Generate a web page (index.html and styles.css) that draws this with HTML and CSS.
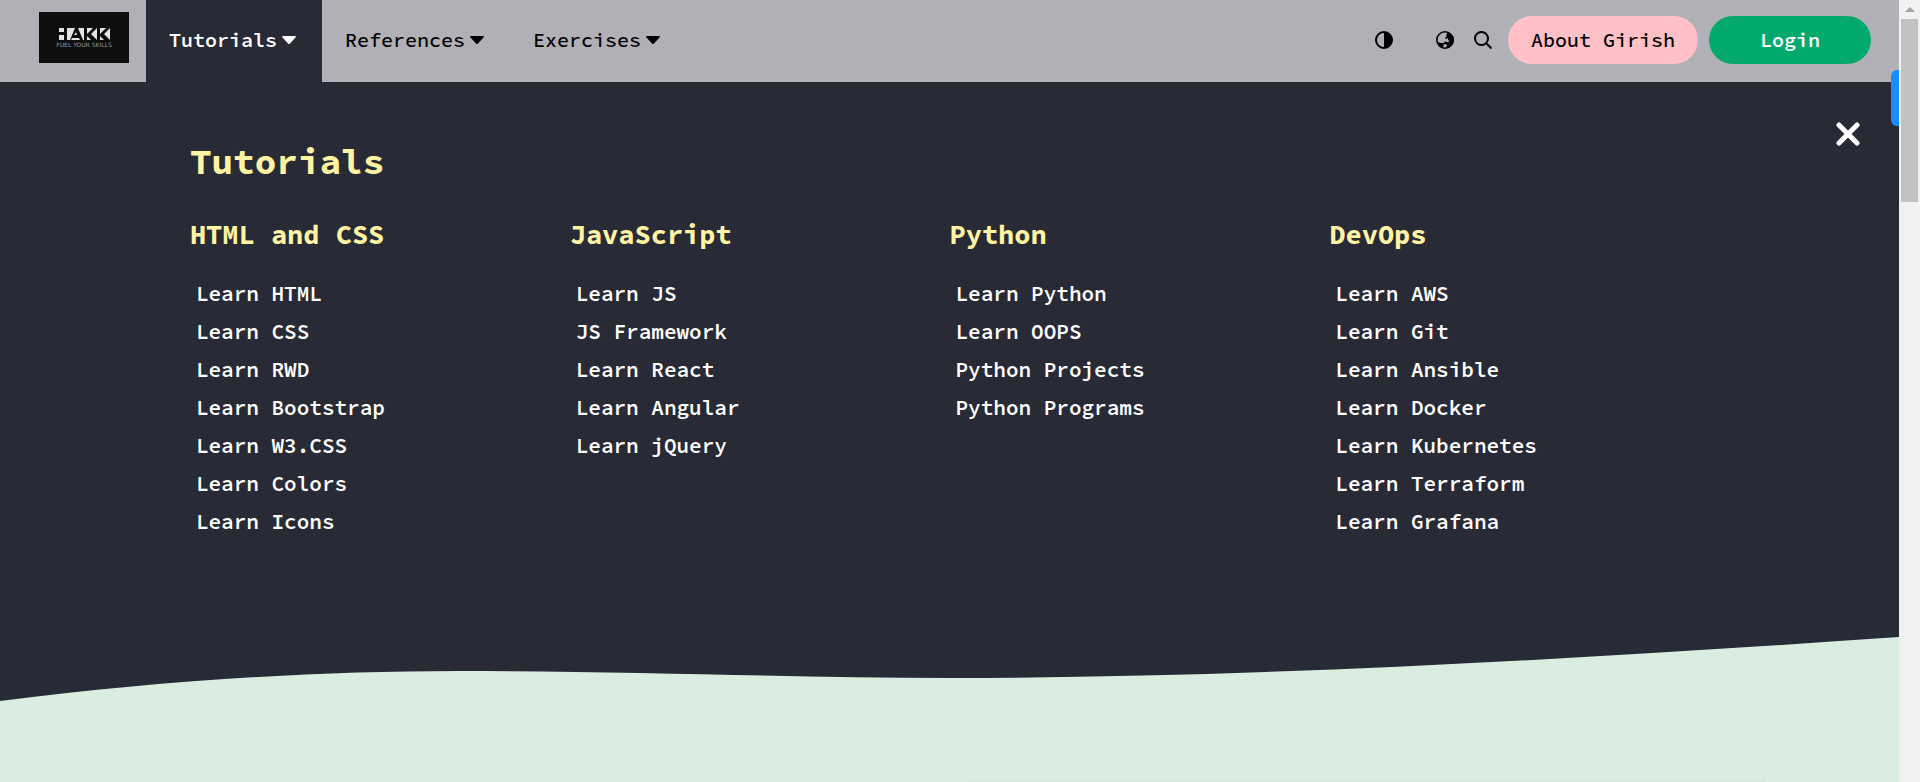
FILE: index.html
```html
<!DOCTYPE html>
<html lang="en">
<head>
<meta charset="utf-8">
<title>HAKK - Tutorials</title>
<link rel="stylesheet" href="styles.css">
</head>
<body>
<div class="page">
  <header class="topbar">
    <a class="logo" href="#" aria-label="HAKK home">
      <svg class="logo-mark" viewBox="0 0 54 14" aria-hidden="true">
        <path fill="#e4e4e4" d="M2 1h5v4H2zM2 8h5v5H2zM10 1h8l-5 12h-3zM19 5l1 3h-3zM15 11h7l1 2h-9zM21 1h6v12h-1zM30 1h6l-6 6zM30 9l4 4h-4zM40 1v12l-6-6zM43 1h6l-6 6zM43 9l4 4h-4zM53 1v12l-6-6z"/>
      </svg>
      <span class="logo-tag">FUEL YOUR SKILLS</span>
    </a>
    <nav class="menu">
      <button class="menu-item active" type="button">Tutorials<svg class="caret" viewBox="0 0 14 8"><path d="M1 0h12q1.500 0 .5 1.500L8 7.500q-1 1-2 0L.5 1.500Q-.5 0 1 0z"/></svg></button>
      <button class="menu-item" type="button">References<svg class="caret" viewBox="0 0 14 8"><path d="M1 0h12q1.500 0 .5 1.500L8 7.500q-1 1-2 0L.5 1.500Q-.5 0 1 0z"/></svg></button>
      <button class="menu-item" type="button">Exercises<svg class="caret" viewBox="0 0 14 8"><path d="M1 0h12q1.500 0 .5 1.500L8 7.500q-1 1-2 0L.5 1.500Q-.5 0 1 0z"/></svg></button>
    </nav>
    <div class="tools">
      <button class="icon contrast" type="button" aria-label="Toggle dark mode"><svg viewBox="0 0 18 18"><circle cx="9" cy="9" r="8" fill="none" stroke="#000" stroke-width="2"/><path d="M9 1a8 8 0 0 1 0 16z"/></svg></button>
      <button class="icon" type="button" aria-label="Translate"><svg viewBox="0 0 18 18"><circle cx="9" cy="9" r="8.200" fill="none" stroke="#000" stroke-width="1.600"/><path d="M12 1l-2 3 1 1-2 2 1 1 2-1 0 2 2 1-2 1h-2l-1-1-1 2-3 0-3-1 1 4 3 2 2-2-1-1 2-1 2 1-1 3 3 0 4-4 1-4-1-4-3-3z"/></svg></button>
      <button class="icon" type="button" aria-label="Search"><svg viewBox="0 0 18 18" fill="none" stroke="#000" stroke-width="2"><circle cx="7.500" cy="7.500" r="6.500"/><path d="M12 12l5.500 5.500"/></svg></button>
    </div>
    <a class="pill about" href="#">About Girish</a>
    <a class="pill login" href="#">Login</a>
  </header>
  <main class="panel">
    <button class="close" type="button" aria-label="Close menu"><svg viewBox="0 0 24 24"><path d="M3 3l18 18M21 3L3 21" stroke="#fff" stroke-width="5" stroke-linecap="round"/></svg></button>
    <h1>Tutorials</h1>
    <div class="columns">
      <section><h2>HTML and CSS</h2>
        <a href="#">Learn HTML</a><a href="#">Learn CSS</a><a href="#">Learn RWD</a><a href="#">Learn Bootstrap</a><a href="#">Learn W3.CSS</a><a href="#">Learn Colors</a><a href="#">Learn Icons</a>
      </section>
      <section><h2>JavaScript</h2>
        <a href="#">Learn JS</a><a href="#">JS Framework</a><a href="#">Learn React</a><a href="#">Learn Angular</a><a href="#">Learn jQuery</a>
      </section>
      <section><h2>Python</h2>
        <a href="#">Learn Python</a><a href="#">Learn OOPS</a><a href="#">Python Projects</a><a href="#">Python Programs</a>
      </section>
      <section><h2>DevOps</h2>
        <a href="#">Learn AWS</a><a href="#">Learn Git</a><a href="#">Learn Ansible</a><a href="#">Learn Docker</a><a href="#">Learn Kubernetes</a><a href="#">Learn Terraform</a><a href="#">Learn Grafana</a>
      </section>
    </div>
  </main>
  <svg class="wave" viewBox="0 0 1899 68" preserveAspectRatio="none" aria-hidden="true"><path d="M0 64C158 44 310 34 459 34C640 34 790 41 950 41C1250 41 1580 22 1899 0V68H0z"/></svg>
  <div class="next"><div class="card-edge"></div></div>
  <div class="side-tab"></div>
</div>
<div class="scrollbar" aria-hidden="true"><div class="arrow"></div><div class="thumb"></div></div>
</body>
</html>
```
FILE: styles.css
```css
* { box-sizing: border-box; }
body {
  margin: 0;
  display: flex;
  min-height: 100vh;
  font-family: "Source Code Pro", "Noto Sans Mono CJK SC", "Liberation Mono", monospace;
  font-size: 20px;
}
button { font: inherit; border: 0; padding: 0; background: none; color: inherit; cursor: pointer; }
a { color: inherit; text-decoration: none; }
svg { display: block; }
.page { position: relative; flex: 1; display: flex; flex-direction: column; background: #282a35; overflow: hidden; }
.topbar { display: flex; align-items: flex-start; padding-right: 28px; background: #b1b0b6; color: #000; }
.logo {
  display: flex; flex-direction: column; align-items: center; justify-content: center; gap: 1px;
  width: 90px; height: 51px; margin: 12px 17px 0 39px; background: #0e0e0e;
}
.logo-mark { width: 54px; height: 14px; }
.logo-tag { font: 6px/6px "DejaVu Sans", sans-serif; color: #999; white-space: nowrap; }
.menu { display: flex; }
.menu-item { display: flex; align-items: center; gap: 5px; padding: 24px 26px 26px 23px; line-height: 32px; font-weight: 500; }
.menu-item.active { background: #282a35; color: #fff; font-weight: 600; }
.caret { width: 14px; height: 8px; fill: currentColor; }
.tools { display: flex; align-items: center; gap: 20px; height: 48px; margin: 16px 16px 0 auto; }
.icon svg { width: 18px; height: 18px; }
.contrast { margin-right: 23px; }
.pill { display: flex; align-items: center; justify-content: center; height: 48px; margin-top: 16px; padding: 0 23px; border-radius: 24px; line-height: 32px; }
.about { background: #ffc0c7; margin-right: 11px; font-weight: 500; }
.login { background: #04aa6d; color: #fff; font-weight: 600; padding: 0 51px; }
.panel { position: relative; padding: 56px 0 96px 10%; color: #fff; }
.close { position: absolute; top: 40px; right: 39px; }
.close svg { width: 24px; height: 24px; }
h1, h2 { margin: 0; color: #fff4a3; font-weight: 700; }
h1 { font-size: 36px; line-height: 48px; }
h2 { font-size: 27px; line-height: 40px; margin-bottom: 21px; }
.columns { display: grid; grid-template-columns: repeat(4, 22.222%); margin-top: 28px; }
.columns a { display: block; padding-left: 6px; font-size: 21px; line-height: 38px; font-weight: 600; }
.wave { width: 100%; height: 68px; fill: #d9eee1; }
.next { flex: 1; display: flex; align-items: flex-end; justify-content: flex-end; margin-top: -1px; background: #d9eee1; }
.card-edge { width: 42%; height: 3px; margin-right: 7%; background: linear-gradient(#d9eee1, #d2e6da); }
.side-tab { position: absolute; top: 70px; right: 0; width: 8px; height: 56px; background: #168eff; border-radius: 6px 0 0 6px; }
.scrollbar { display: flex; flex-direction: column; align-items: center; width: 21px; background: #f1f1f1; }
.arrow { margin: 7px 0; border: 5px solid transparent; border-top: 0; border-bottom-color: #a3a3a3; }
.thumb { width: 17px; height: 183px; background: #c1c1c1; }
```
